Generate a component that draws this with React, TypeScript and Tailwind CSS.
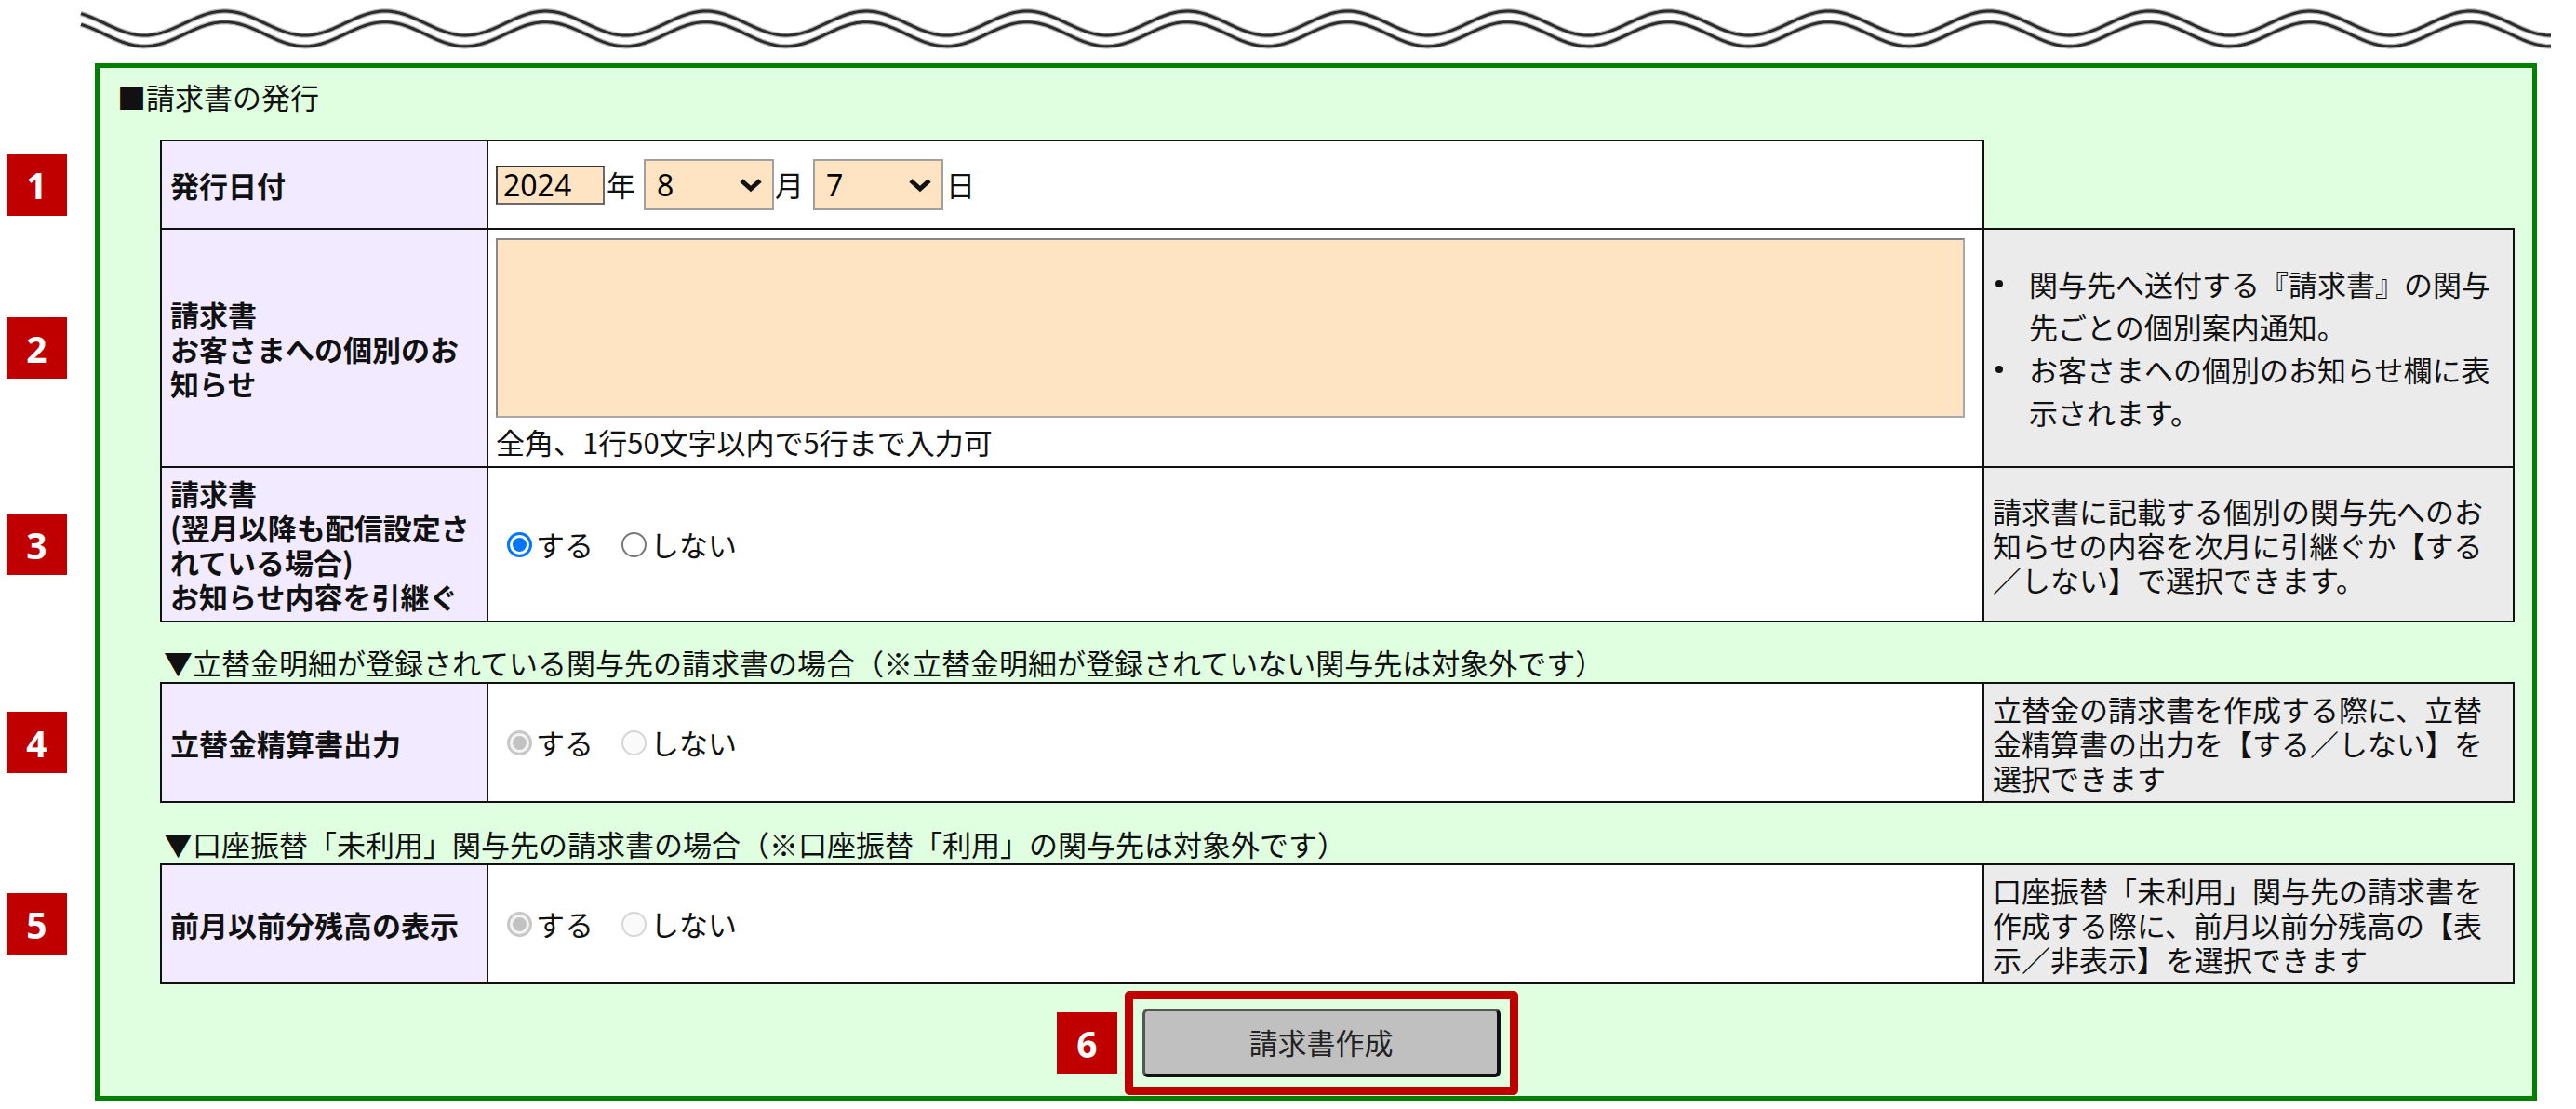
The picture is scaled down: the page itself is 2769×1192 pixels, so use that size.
import React from "react";

const JP = "font-['Noto_Sans_CJK_JP',sans-serif]";
const LATIN = "font-['Noto_Sans','Noto_Sans_CJK_JP',sans-serif]";

// sine wave across the top of the page
const wavePath = (offset: number) => {
  const pts: string[] = [];
  for (let x = 87; x <= 2742; x += 3) {
    const y = 25 + offset - 13 * Math.cos((2 * Math.PI * (x - 241.5)) / 172.43);
    pts.push(`${x},${y.toFixed(2)}`);
  }
  return "M" + pts.join(" L");
};

function Wave() {
  return (
    <svg width="2769" height="68" className="block">
      {[0, 11.7].map((o) => (
        <g key={o}>
          <path d={wavePath(o)} fill="none" stroke="#b5b5b5" strokeWidth="5.5" />
          <path d={wavePath(o)} fill="none" stroke="#2b2b2b" strokeWidth="3" />
        </g>
      ))}
    </svg>
  );
}

function Badge({ n, className = "" }: { n: number; className?: string }) {
  return (
    <div
      className={`absolute top-1/2 -translate-y-1/2 w-[65px] h-[66px] bg-[#c00000] text-white font-bold text-[39px] leading-none flex items-center justify-center ${LATIN} ${className}`}
    >
      {n}
    </div>
  );
}

function Radio({ checked, disabled, className = "" }: { checked?: boolean; disabled?: boolean; className?: string }) {
  if (checked) {
    return (
      <span
        className={`flex w-[27px] h-[27px] shrink-0 rounded-full border-[3px] items-center justify-center ${
          disabled ? "border-[#c8c8c8] bg-[#f4f4f4]" : "border-[#0075ff] bg-white"
        } ${className}`}
      >
        <span className={`block w-[15px] h-[15px] rounded-full ${disabled ? "bg-[#c2c2c2]" : "bg-[#0075ff]"}`} />
      </span>
    );
  }
  return (
    <span
      className={`block w-[27px] h-[27px] shrink-0 rounded-full border-2 ${
        disabled ? "border-[#d6d6d6] bg-[#fafafa]" : "border-[#767676] bg-white"
      } ${className}`}
    />
  );
}

function RadioPair({ disabled }: { disabled?: boolean }) {
  return (
    <div className="flex items-center pl-[8px]">
      <Radio checked disabled={disabled} className="ml-[12px]" />
      <span className="ml-[4px]">する</span>
      <Radio disabled={disabled} className="ml-[30px]" />
      <span className="ml-[4px]">しない</span>
    </div>
  );
}

const labelCell =
  "relative w-[353px] shrink-0 border-l-2 border-r-2 border-[#111] bg-[#f2ebff] px-[9px] flex items-center font-bold leading-[37px] whitespace-pre-line";
const valueCell = "w-[1608px] shrink-0 border-r-2 border-[#111] bg-white";
const noteCell =
  "w-[570px] shrink-0 border-r-2 border-[#111] bg-[#ebebeb] px-[9px] flex items-center leading-[37px]";

function Chevron() {
  return (
    <svg
      width="26"
      height="16"
      viewBox="0 0 26 16"
      className="absolute right-[12px] top-1/2 -translate-y-1/2 pointer-events-none"
    >
      <polyline points="3,3 13,12 23,3" fill="none" stroke="#111" strokeWidth="5" strokeLinejoin="miter" />
    </svg>
  );
}

function DateSelect({ value, max }: { value: string; max: number }) {
  return (
    <div className="relative">
      <select
        defaultValue={value}
        className={`appearance-none w-[140px] h-[55px] bg-[#ffe4c4] border-2 border-[#a0a0a0] pl-[12px] text-[32px] leading-none text-black outline-none ${LATIN}`}
      >
        {Array.from({ length: max }, (_, i) => String(i + 1)).map((v) => (
          <option key={v} value={v}>
            {v}
          </option>
        ))}
      </select>
      <Chevron />
    </div>
  );
}

export default function App() {
  return (
    <div className={`w-[2769px] h-[1192px] bg-white text-[#111] text-[31px] ${JP}`}>
      <Wave />

      <div className="ml-[102px] w-[2625px] border-[5px] border-[#008000] bg-[#e0ffe0] px-[19px] pt-[12px] pb-[1px]">
        <p className="leading-[37px]">■請求書の発行</p>

        {/* 発行日付 / お知らせ / 引継ぎ */}
        <div className="ml-[46px] mt-[28px]">
          <div className="flex h-[97px]">
            <div className={`${labelCell} border-t-2 border-b-2`}>
              <Badge n={1} className="left-[-167px]" />
              発行日付
            </div>
            <div className={`${valueCell} border-t-2 border-b-2 pl-[8px] flex items-center`}>
              <input
                defaultValue="2024"
                className={`w-[117px] h-[42px] bg-[#ffe4c4] border-2 border-[#6a6a6a] border-t-[#333] border-l-[#444] px-[6px] text-[32px] leading-none text-black outline-none ${LATIN}`}
              />
              <span className="ml-[2px]">年</span>
              <span className="ml-[9px]">
                <DateSelect value="8" max={12} />
              </span>
              <span className="ml-[1px]">月</span>
              <span className="ml-[10px]">
                <DateSelect value="7" max={31} />
              </span>
              <span className="ml-[3px]">日</span>
            </div>
            <div className="w-[570px] shrink-0 border-b-2 border-[#111]" />
          </div>

          <div className="flex h-[256px]">
            <div className={`${labelCell} border-b-2`}>
              <Badge n={2} className="left-[-167px]" />
              <span>{"請求書\nお客さまへの個別のお知らせ"}</span>
            </div>
            <div className={`${valueCell} border-b-2 pl-[8px] pt-[9px] flex flex-col`}>
              <textarea className="block w-[1579px] h-[193px] resize-none bg-[#ffe4c4] border-2 border-[#a8a8a8] border-t-[#858585] border-l-[#8a8a8a] outline-none" />
              <p className="mt-[7px] leading-[37px]">全角、1行50文字以内で5行まで入力可</p>
            </div>
            <div className={`${noteCell} border-b-2`}>
              <ul className="leading-[46px]">
                {["関与先へ送付する『請求書』の関与先ごとの個別案内通知。", "お客さまへの個別のお知らせ欄に表示されます。"].map(
                  (t) => (
                    <li key={t} className="flex">
                      <span className="w-[39px] h-[46px] shrink-0 flex items-center">
                        <span className="block ml-[3px] w-[8px] h-[8px] rounded-full bg-[#111]" />
                      </span>
                      <span>{t}</span>
                    </li>
                  )
                )}
              </ul>
            </div>
          </div>

          <div className="flex h-[166px]">
            <div className={`${labelCell} border-b-2`}>
              <Badge n={3} className="left-[-167px]" />
              <span>{"請求書\n(翌月以降も配信設定されている場合)\nお知らせ内容を引継ぐ"}</span>
            </div>
            <div className={`${valueCell} border-b-2 flex items-center`}>
              <RadioPair />
            </div>
            <div className={`${noteCell} border-b-2`}>
              請求書に記載する個別の関与先へのお知らせの内容を次月に引継ぐか【する／しない】で選択できます。
            </div>
          </div>
        </div>

        {/* 立替金 */}
        <p className="ml-[50px] mt-[24px] mb-[3px] leading-[37px]">
          ▼立替金明細が登録されている関与先の請求書の場合（※立替金明細が登録されていない関与先は対象外です）
        </p>
        <div className="ml-[46px] flex h-[130px]">
          <div className={`${labelCell} border-t-2 border-b-2`}>
            <Badge n={4} className="left-[-167px]" />
            立替金精算書出力
          </div>
          <div className={`${valueCell} border-t-2 border-b-2 flex items-center`}>
            <RadioPair disabled />
          </div>
          <div className={`${noteCell} border-t-2 border-b-2`}>
            立替金の請求書を作成する際に、立替金精算書の出力を【する／しない】を選択できます
          </div>
        </div>

        {/* 口座振替 */}
        <p className="ml-[50px] mt-[25px] mb-[3px] leading-[37px]">
          ▼口座振替「未利用」関与先の請求書の場合（※口座振替「利用」の関与先は対象外です）
        </p>
        <div className="ml-[46px] flex h-[130px]">
          <div className={`${labelCell} border-t-2 border-b-2`}>
            <Badge n={5} className="left-[-167px]" />
            前月以前分残高の表示
          </div>
          <div className={`${valueCell} border-t-2 border-b-2 flex items-center`}>
            <RadioPair disabled />
          </div>
          <div className={`${noteCell} border-t-2 border-b-2`}>
            口座振替「未利用」関与先の請求書を作成する際に、前月以前分残高の【表示／非表示】を選択できます
          </div>
        </div>

        <div className="relative ml-[1083px] mt-[7px] w-[423px] h-[112px] border-[9px] border-[#c00000] rounded-[5px] p-[10px]">
          <Badge n={6} className="left-[-82px]" />
          <button className="w-full h-full bg-[#c0c0c0] border-[3px] border-[#555] border-r-4 border-b-4 border-r-[#111] border-b-[#111] rounded-[6px] text-[31px] text-[#222]">
            請求書作成
          </button>
        </div>
      </div>
    </div>
  );
}
